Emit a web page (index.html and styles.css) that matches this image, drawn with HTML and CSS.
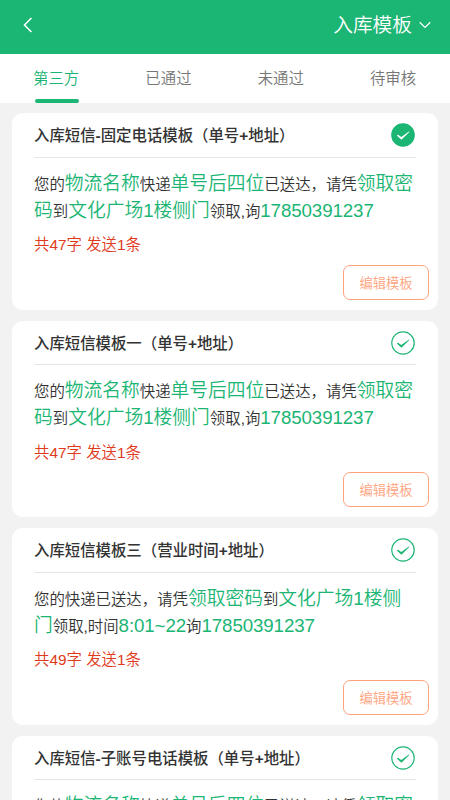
FILE: index.html
```html
<!DOCTYPE html>
<html lang="zh-CN">
<head>
<meta charset="utf-8">
<title>入库模板</title>
<link rel="stylesheet" href="styles.css">
</head>
<body>
<header class="header">
  <svg class="back" viewBox="0 0 10 16"><path d="M8.4 1 1.5 8l6.9 7"/></svg>
  <div class="picker">入库模板<svg class="chevron" viewBox="0 0 12 8"><path d="M.7 1.2 6 6.4l5.3-5.2"/></svg></div>
</header>
<nav class="tabs">
  <span class="tab active">第三方</span>
  <span class="tab">已通过</span>
  <span class="tab">未通过</span>
  <span class="tab">待审核</span>
</nav>
<main class="list">
  <section class="card">
    <div class="card-head"><h2>入库短信<i>-</i>固定电话模板（单号<i>+</i>地址）</h2><svg class="check on" viewBox="0 0 24 24"><circle cx="12" cy="12" r="11.2"/><path d="m5.8 12.5 1.3-.8 3.2 2.3 7.6-5.6.5.5-8 7.8z"/></svg></div>
    <p class="message">您的<b>物流名称</b>快递<b>单号后四位</b>已送达，请凭<b>领取密<br>码</b>到<b>文化广场1楼侧门</b>领取,询<b class="num">17850391237</b></p>
    <p class="count">共47字 发送1条</p>
    <button class="edit">编辑模板</button>
  </section>
  <section class="card">
    <div class="card-head"><h2>入库短信模板一（单号<i>+</i>地址）</h2><svg class="check" viewBox="0 0 24 24"><circle cx="12" cy="12" r="11.2"/><path d="m5.8 12.5 1.3-.8 3.2 2.3 7.6-5.6.5.5-8 7.8z"/></svg></div>
    <p class="message">您的<b>物流名称</b>快递<b>单号后四位</b>已送达，请凭<b>领取密<br>码</b>到<b>文化广场1楼侧门</b>领取,询<b class="num">17850391237</b></p>
    <p class="count">共47字 发送1条</p>
    <button class="edit">编辑模板</button>
  </section>
  <section class="card">
    <div class="card-head"><h2>入库短信模板三（营业时间<i>+</i>地址）</h2><svg class="check" viewBox="0 0 24 24"><circle cx="12" cy="12" r="11.2"/><path d="m5.8 12.5 1.3-.8 3.2 2.3 7.6-5.6.5.5-8 7.8z"/></svg></div>
    <p class="message">您的快递已送达，请凭<b>领取密码</b>到<b>文化广场1楼侧<br>门</b>领取,时间<b class="num">8:01~22</b>询<b class="num">17850391237</b></p>
    <p class="count">共49字 发送1条</p>
    <button class="edit">编辑模板</button>
  </section>
  <section class="card">
    <div class="card-head"><h2>入库短信<i>-</i>子账号电话模板（单号<i>+</i>地址）</h2><svg class="check" viewBox="0 0 24 24"><circle cx="12" cy="12" r="11.2"/><path d="m5.8 12.5 1.3-.8 3.2 2.3 7.6-5.6.5.5-8 7.8z"/></svg></div>
    <p class="message">您的<b>物流名称</b>快递<b>单号后四位</b>已送达，请凭<b>领取密<br>码</b>到<b>文化广场1楼侧门</b>领取,询<b class="num">17850391237</b></p>
    <p class="count">共47字 发送1条</p>
    <button class="edit">编辑模板</button>
  </section>
</main>
</body>
</html>
```
FILE: styles.css
```css
* { box-sizing: border-box; }
body {
  margin: 0;
  height: 800px;
  overflow: hidden;
  background: #f2f2f2;
  color: #333;
  font-family: "Liberation Sans", "Noto Sans CJK SC", sans-serif;
  font-size: 15.4px;
  font-weight: 350;
}
.header {
  height: 54px;
  padding: 0 19px 4px 23px;
  display: flex;
  align-items: center;
  justify-content: space-between;
  background: #1bb574;
  color: #fff;
}
.back { width: 10px; height: 16px; fill: none; stroke: #fff; stroke-width: 1.6; }
.picker { display: flex; align-items: center; font-size: 19.7px; line-height: 28px; }
.chevron { width: 12px; height: 8px; margin-left: 7px; fill: none; stroke: #fff; stroke-width: 1.2; }
.tabs {
  height: 48.5px;
  display: grid;
  grid-template-columns: repeat(4, 112.3px);
  background: #fff;
  color: #777;
}
.tab {
  height: 48.5px;
  line-height: 49px;
  display: flex;
  flex-direction: column;
  align-items: center;
}
.active { color: #1bb574; }
.active::after {
  content: "";
  width: 44px;
  height: 4px;
  margin: -4px 0 0 1px;
  border-radius: 2px;
  background: #1bb574;
}
.list { padding: 10.7px 12px 0; display: flex; flex-direction: column; gap: 11px; }
.card {
  flex: none;
  height: 196.5px;
  padding: 0 9px 0 22px;
  border-radius: 11px;
  background: #fff;
  display: flex;
  flex-direction: column;
}
.card-head {
  flex: none;
  height: 44.5px;
  margin-right: 13px;
  padding: 1px 1px 0 0;
  border-bottom: 1px solid #e6e6e9;
  display: flex;
  align-items: center;
  justify-content: space-between;
}
h2 { margin: 0; padding-top: 2px; font-size: 15.4px; font-weight: 500; line-height: 22px; white-space: nowrap; }
h2 i { font-style: normal; font-weight: 700; }
.check { width: 24px; height: 24px; fill: none; stroke: #1bb574; stroke-width: 1.2; }
.check path { fill: #1bb574; stroke: none; }
.check.on circle { fill: #1bb574; }
.check.on path { fill: #fff; }
.message { margin: 13px 0 0; line-height: 27px; white-space: nowrap; }
.message b { color: #1bb574; font-size: 18.75px; font-weight: 350; line-height: 1; }
.message .num { letter-spacing: -0.12px; }
.count { margin: 9.5px 0 0; color: #e03a20; line-height: 22px; }
.edit {
  width: 86px;
  height: 35px;
  margin: 8.5px 0 0;
  padding: 0;
  align-self: flex-end;
  border: 1px solid #ffa37d;
  border-radius: 7px;
  background: #fff;
  color: #ffa37d;
  font: inherit;
  font-size: 13.3px;
}
```
